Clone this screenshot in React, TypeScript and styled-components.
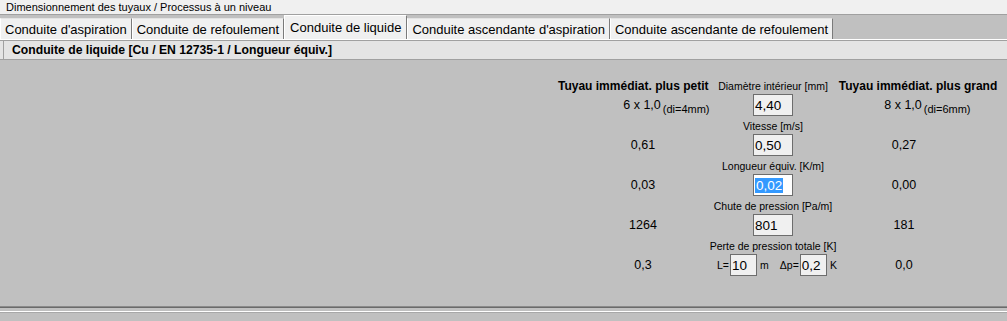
import React from 'react'
import styled, { createGlobalStyle } from 'styled-components'

const GlobalStyle = createGlobalStyle`
  html, body, #root {
    height: 100%;
  }

  body {
    margin: 0;
    font-family: 'Liberation Sans', Arial, sans-serif;
    color: #000;
    background: #c0c0c0;
  }

  * {
    box-sizing: border-box;
  }
`

const Window = styled.div`
  display: flex;
  flex-direction: column;
  height: 100%;
  overflow: hidden;
`

const TitleBar = styled.div`
  height: 15px;
  padding-left: 6px;
  font-size: 11px;
  line-height: 14px;
  background: #f0f0f0;
  border-bottom: 1px solid #a0a0a0;
  white-space: nowrap;
`

const TabStrip = styled.div`
  display: flex;
  align-items: flex-end;
  height: 26px;
  padding-bottom: 1px;
  background: #c0c0c0;
  border-bottom: 1px solid #a0a0a0;
  box-shadow: inset 0 -1px #fff;
`

const Tab = styled.div<{ $active?: boolean }>`
  display: flex;
  align-items: center;
  height: ${(props) => (props.$active ? 24 : 21)}px;
  padding: 0 ${(props) => (props.$active ? 5 : 4)}px;
  font-size: 13px;
  white-space: nowrap;
  background: #f0f0f0;
  border-top: 1px solid ${(props) => (props.$active ? '#fff' : '#e3e3e3')};
  border-left: 1px solid #fff;
  border-right: 1px solid #7a7a7a;
`

const SectionBar = styled.div`
  display: flex;
  height: 19px;
  padding-left: 3px;
  background: #e4e4e4;
  border-bottom: 1px solid #a0a0a0;
`

const SectionTitle = styled.div`
  flex: 1;
  padding-left: 8px;
  border-left: 1px solid #a0a0a0;
  font-size: 12.2px;
  font-weight: bold;
  line-height: 18px;
  white-space: nowrap;
`

const Body = styled.div`
  flex: 1;
  display: flex;
  justify-content: flex-end;
  align-items: flex-start;
  padding: 20px 9px 0 0;
`

const Form = styled.div`
  display: flex;
  flex-direction: column;
  gap: 4px;
  width: 440px;
`

const Group = styled.div`
  display: grid;
  grid-template-columns: 150px 130px 160px;
  grid-template-rows: 14px 22px;
`

const ColumnHead = styled.div<{ $col: number }>`
  grid-row: 1;
  grid-column: ${(props) => props.$col};
  font-size: 12px;
  font-weight: bold;
  line-height: 12px;
  text-align: center;
  white-space: nowrap;
`

const Caption = styled.div`
  grid-row: 1;
  grid-column: 2;
  font-size: 10.5px;
  line-height: 12px;
  text-align: center;
  white-space: nowrap;
`

const Value = styled.div<{ $side: 'left' | 'right' }>`
  grid-row: 2;
  grid-column: ${(props) => (props.$side === 'left' ? 1 : 3)};
  display: flex;
  align-items: center;
  justify-content: center;
  padding: ${(props) => (props.$side === 'left' ? '0 0 0 20px' : '0 28px 0 0')};
  font-size: 12.5px;
  white-space: nowrap;
`

const Sub = styled.span`
  display: inline-block;
  width: 0;
  margin-left: 2px;
  font-size: 11px;
  white-space: nowrap;
  transform: translateY(4px);
`

const Middle = styled.div<{ $start?: boolean }>`
  grid-row: 2;
  grid-column: 2;
  display: flex;
  align-items: center;
  justify-content: ${(props) => (props.$start ? 'flex-start' : 'center')};
  padding-left: ${(props) => (props.$start ? 9 : 0)}px;
  font-size: 10.5px;
  white-space: nowrap;
`

const Field = styled.div<{ $width?: number; $focused?: boolean }>`
  display: flex;
  align-items: center;
  width: ${(props) => props.$width || 40}px;
  height: 22px;
  padding-left: 1px;
  font-size: 13.5px;
  background: ${(props) => (props.$focused ? '#fff' : '#f0f0f0')};
  border: 1px solid #6d6d6d;
`

const Selected = styled.span`
  padding: 0 1px;
  line-height: 15px;
  color: #fff;
  background: #3399ff;
`

const Unit = styled.span<{ $gap?: number }>`
  margin: 0 1px 0 ${(props) => props.$gap || 0}px;
`

const Footer = styled.div`
  height: 15px;
  box-shadow: inset 0 1px #8a8a8a, inset 0 2px #6a6a6a;
`

const StatusBar = styled.div`
  height: 10px;
  margin-top: 5px;
  border-top: 1px solid #fff;
  box-shadow: inset 0 1px #a8a8a8;
`

const tabs = [
  'Conduite d\'aspiration',
  'Conduite de refoulement',
  'Conduite de liquide',
  'Conduite ascendante d\'aspiration',
  'Conduite ascendante de refoulement',
]

const rows = [
  { caption: 'Diamètre intérieur [mm]', left: '6 x 1,0', leftSub: '(di=4mm)', value: '4,40', right: '8 x 1,0', rightSub: '(di=6mm)' },
  { caption: 'Vitesse [m/s]', left: '0,61', value: '0,50', right: '0,27' },
  { caption: 'Longueur équiv. [K/m]', left: '0,03', value: '0,02', right: '0,00', focused: true },
  { caption: 'Chute de pression [Pa/m]', left: '1264', value: '801', right: '181' },
]

const App = () => {
  return (
    <Window>
      <GlobalStyle />
      <TitleBar>Dimensionnement des tuyaux / Processus à un niveau</TitleBar>
      <TabStrip>
        {tabs.map((label, i) => (
          <Tab key={label} $active={i === 2}>{label}</Tab>
        ))}
      </TabStrip>
      <SectionBar>
        <SectionTitle>Conduite de liquide [Cu / EN 12735-1 / Longueur équiv.]</SectionTitle>
      </SectionBar>
      <Body>
        <Form>
          {rows.map((row, i) => (
            <Group key={row.caption}>
              {i === 0 && <ColumnHead $col={1}>Tuyau immédiat. plus petit</ColumnHead>}
              <Caption>{row.caption}</Caption>
              {i === 0 && <ColumnHead $col={3}>Tuyau immédiat. plus grand</ColumnHead>}
              <Value $side='left'>
                {row.left}
                {row.leftSub && <Sub>{row.leftSub}</Sub>}
              </Value>
              <Middle>
                <Field $focused={row.focused}>
                  {row.focused ? <Selected>{row.value}</Selected> : row.value}
                </Field>
              </Middle>
              <Value $side='right'>
                {row.right}
                {row.rightSub && <Sub>{row.rightSub}</Sub>}
              </Value>
            </Group>
          ))}
          <Group>
            <Caption>Perte de pression totale [K]</Caption>
            <Value $side='left'>0,3</Value>
            <Middle $start>
              <Unit>L=</Unit>
              <Field $width={28}>10</Field>
              <Unit $gap={3}>m</Unit>
              <Unit $gap={10}>Δp=</Unit>
              <Field $width={28}>0,2</Field>
              <Unit $gap={3}>K</Unit>
            </Middle>
            <Value $side='right'>0,0</Value>
          </Group>
        </Form>
      </Body>
      <Footer>
        <StatusBar />
      </Footer>
    </Window>
  )
}

export default App
